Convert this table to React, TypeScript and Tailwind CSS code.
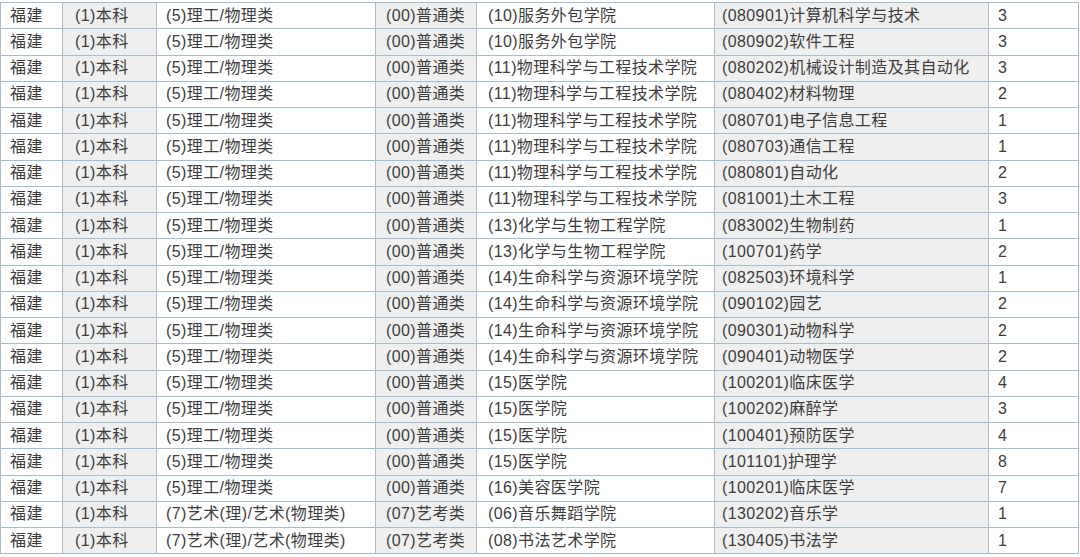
const rows: [string, string, string, string, string, string, string][] = [
  ["福建", "(1)本科", "(5)理工/物理类", "(00)普通类", "(10)服务外包学院", "(080901)计算机科学与技术", "3"],
  ["福建", "(1)本科", "(5)理工/物理类", "(00)普通类", "(10)服务外包学院", "(080902)软件工程", "3"],
  ["福建", "(1)本科", "(5)理工/物理类", "(00)普通类", "(11)物理科学与工程技术学院", "(080202)机械设计制造及其自动化", "3"],
  ["福建", "(1)本科", "(5)理工/物理类", "(00)普通类", "(11)物理科学与工程技术学院", "(080402)材料物理", "2"],
  ["福建", "(1)本科", "(5)理工/物理类", "(00)普通类", "(11)物理科学与工程技术学院", "(080701)电子信息工程", "1"],
  ["福建", "(1)本科", "(5)理工/物理类", "(00)普通类", "(11)物理科学与工程技术学院", "(080703)通信工程", "1"],
  ["福建", "(1)本科", "(5)理工/物理类", "(00)普通类", "(11)物理科学与工程技术学院", "(080801)自动化", "2"],
  ["福建", "(1)本科", "(5)理工/物理类", "(00)普通类", "(11)物理科学与工程技术学院", "(081001)土木工程", "3"],
  ["福建", "(1)本科", "(5)理工/物理类", "(00)普通类", "(13)化学与生物工程学院", "(083002)生物制药", "1"],
  ["福建", "(1)本科", "(5)理工/物理类", "(00)普通类", "(13)化学与生物工程学院", "(100701)药学", "2"],
  ["福建", "(1)本科", "(5)理工/物理类", "(00)普通类", "(14)生命科学与资源环境学院", "(082503)环境科学", "1"],
  ["福建", "(1)本科", "(5)理工/物理类", "(00)普通类", "(14)生命科学与资源环境学院", "(090102)园艺", "2"],
  ["福建", "(1)本科", "(5)理工/物理类", "(00)普通类", "(14)生命科学与资源环境学院", "(090301)动物科学", "2"],
  ["福建", "(1)本科", "(5)理工/物理类", "(00)普通类", "(14)生命科学与资源环境学院", "(090401)动物医学", "2"],
  ["福建", "(1)本科", "(5)理工/物理类", "(00)普通类", "(15)医学院", "(100201)临床医学", "4"],
  ["福建", "(1)本科", "(5)理工/物理类", "(00)普通类", "(15)医学院", "(100202)麻醉学", "3"],
  ["福建", "(1)本科", "(5)理工/物理类", "(00)普通类", "(15)医学院", "(100401)预防医学", "4"],
  ["福建", "(1)本科", "(5)理工/物理类", "(00)普通类", "(15)医学院", "(101101)护理学", "8"],
  ["福建", "(1)本科", "(5)理工/物理类", "(00)普通类", "(16)美容医学院", "(100201)临床医学", "7"],
  ["福建", "(1)本科", "(7)艺术(理)/艺术(物理类)", "(07)艺考类", "(06)音乐舞蹈学院", "(130202)音乐学", "1"],
  ["福建", "(1)本科", "(7)艺术(理)/艺术(物理类)", "(07)艺考类", "(08)书法艺术学院", "(130405)书法学", "1"],
];

// column widths + left padding, odd columns white, even columns grey
const cols = [
  { w: "w-[62px]", pl: "pl-[9px]", bg: "bg-white" },
  { w: "w-[94px]", pl: "pl-[12px]", bg: "bg-[#efefef]" },
  { w: "w-[219px]", pl: "pl-[9px]", bg: "bg-white" },
  { w: "w-[101px]", pl: "pl-[10px]", bg: "bg-[#efefef]" },
  { w: "w-[238px]", pl: "pl-[11px]", bg: "bg-white" },
  { w: "w-[274px]", pl: "pl-[7px]", bg: "bg-[#efefef]" },
  { w: "w-[90px]", pl: "pl-[9px]", bg: "bg-white" },
];

export default function App() {
  return (
    <div className="w-[1080px] h-[557px] overflow-hidden bg-white pt-[2px]">
      <table
        className="table-fixed border-collapse w-[1079px] text-[16px] leading-none tracking-[0.4px] text-[#3d3d3d]"
        style={{ fontFamily: '"Liberation Sans", "Noto Sans CJK SC", sans-serif' }}
      >
        <colgroup>
          {cols.map((c, i) => <col key={i} className={c.w} />)}
        </colgroup>
        <tbody>
          {rows.map((r, ri) => (
            <tr key={ri} className="h-[26.25px]">
              {r.map((cell, ci) => (
                <td
                  key={ci}
                  className={`border border-[#a8bccb] ${cols[ci].bg} ${cols[ci].pl} whitespace-nowrap overflow-hidden p-0 align-middle`}
                >
                  {cell}
                </td>
              ))}
            </tr>
          ))}
        </tbody>
      </table>
    </div>
  );
}
